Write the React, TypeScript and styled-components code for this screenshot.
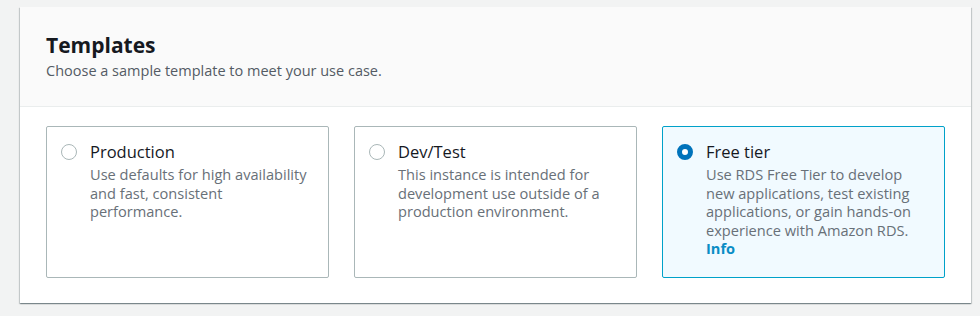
import React from "react";
import styled, { createGlobalStyle } from "styled-components";

const Global = createGlobalStyle`
  html, body { margin: 0; padding: 0; background: #f2f3f3; }
  body { font-family: "Open Sans", "Noto Sans", sans-serif; -webkit-font-smoothing: antialiased; }
  * { box-sizing: border-box; }
`;

const Page = styled.div`
  padding: 7px 9px 0 20px;
  width: 980px;
  height: 316px;
`;

const Panel = styled.section`
  width: 951px;
  background: #ffffff;
  box-shadow: 0 1px 1px 0 rgba(0, 28, 36, 0.3), 1px 1px 1px 0 rgba(0, 28, 36, 0.15),
    -1px 1px 1px 0 rgba(0, 28, 36, 0.15);
`;

const Header = styled.header`
  background: #fafafa;
  border-bottom: 1px solid #eaeded;
  padding: 26px 25px 0 26px;
  height: 100px;
`;

const Title = styled.h2`
  margin: 0;
  font-size: 21px;
  line-height: 24px;
  font-weight: 700;
  color: #16191f;
`;

const Subtitle = styled.p`
  margin: 4px 0 0;
  font-size: 14.5px;
  line-height: 20px;
  color: #545b64;
`;

const Body = styled.div`
  padding: 19px 25px 25px 26px;
  display: grid;
  grid-template-columns: repeat(3, 283px);
  column-gap: 25px;
`;

const Card = styled.label<{ $selected?: boolean }>`
  display: flex;
  align-items: flex-start;
  gap: 13px;
  height: 152px;
  padding: 15px 16px 14px 14px;
  border: 1px solid ${(p) => (p.$selected ? "#00a1c9" : "#aab7b8")};
  border-radius: 2px;
  background: ${(p) => (p.$selected ? "#f1faff" : "#ffffff")};
  cursor: pointer;
`;

const Radio = styled.span<{ $checked?: boolean }>`
  flex: none;
  width: 16px;
  height: 16px;
  margin-top: 2px;
  border-radius: 50%;
  border: ${(p) => (p.$checked ? "5px solid #0073bb" : "1.5px solid #aab7b8")};
  background: #ffffff;
`;

const Text = styled.div`
  flex: 1;
  min-width: 0;
  display: flex;
  flex-direction: column;
  align-items: flex-start;
`;

const CardTitle = styled.span`
  font-size: 16.5px;
  line-height: 20px;
  color: #16191f;
`;

const Desc = styled.span`
  margin-top: 3px;
  font-size: 14.6px;
  line-height: 18.5px;
  color: #687078;
`;

const InfoLink = styled.a`
  font-size: 14.6px;
  line-height: 18.5px;
  font-weight: 700;
  color: #0a8dc5;
  text-decoration: none;
`;

const options = [
  {
    id: "prod",
    title: "Production",
    desc: "Use defaults for high availability and fast, consistent performance.",
  },
  {
    id: "dev",
    title: "Dev/Test",
    desc: "This instance is intended for development use outside of a production environment.",
  },
  {
    id: "free",
    title: "Free tier",
    desc: "Use RDS Free Tier to develop new applications, test existing applications, or gain hands-on experience with Amazon RDS.",
    info: true,
  },
];

export default function App() {
  const selected = "free";
  return (
    <>
      <Global />
      <Page>
        <Panel>
          <Header>
            <Title>Templates</Title>
            <Subtitle>Choose a sample template to meet your use case.</Subtitle>
          </Header>
          <Body>
            {options.map((o) => (
              <Card key={o.id} $selected={o.id === selected}>
                <Radio $checked={o.id === selected} />
                <Text>
                  <CardTitle>{o.title}</CardTitle>
                  <Desc>{o.desc}</Desc>
                  {o.info && <InfoLink href="#">Info</InfoLink>}
                </Text>
              </Card>
            ))}
          </Body>
        </Panel>
      </Page>
    </>
  );
}
